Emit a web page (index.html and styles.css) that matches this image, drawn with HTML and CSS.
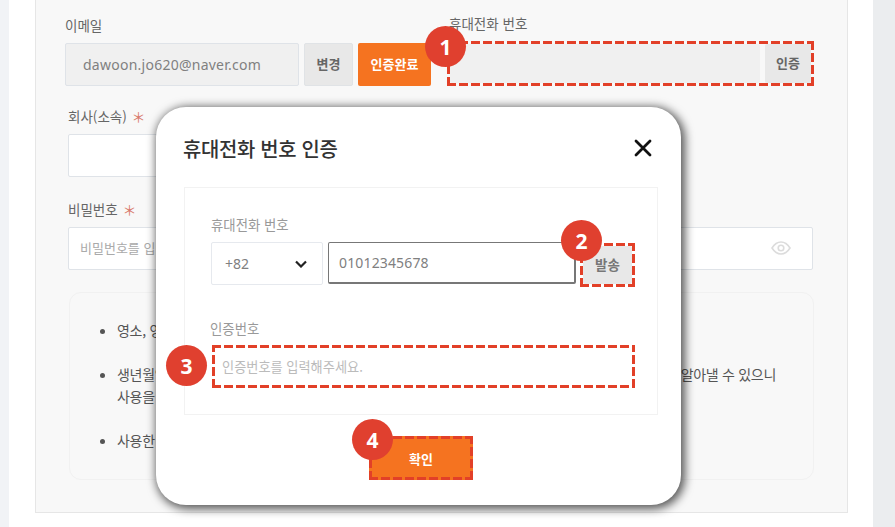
FILE: index.html
```html
<!DOCTYPE html>
<html lang="ko">
<head>
    <meta charset="UTF-8">
    <meta name="viewport" content="width=device-width, initial-scale=1.0">
    <title>휴대전화 번호 인증</title>
    <link rel="stylesheet" href="styles.css">
</head>
<body>
    <div class="sheet">
        <form class="panel">
            <div class="row-top">
                <div class="col-email">
                    <label class="label">이메일</label>
                    <div class="field-row">
                        <input class="input input-email" type="text" value="dawoon.jo620@naver.com" readonly>
                        <button type="button" class="btn btn-gray btn-change">변경</button>
                        <button type="button" class="btn btn-orange btn-done">인증완료</button>
                    </div>
                </div>
                <div class="col-phone">
                    <label class="label">휴대전화 번호</label>
                    <div class="field-row dashed phone-box">
                        <input class="input input-phone" type="text" readonly>
                        <button type="button" class="btn btn-gray btn-auth">인증</button>
                    </div>
                </div>
            </div>

            <div class="group group-company">
                <label class="label">회사(소속) <span class="req">＊</span></label>
                <input class="input input-company" type="text">
            </div>

            <div class="group group-password">
                <label class="label">비밀번호 <span class="req">＊</span></label>
                <div class="password-box">
                    <span class="placeholder">비밀번호를 입력</span>
                    <svg class="eye" width="20" height="14" viewBox="0 0 20 14" fill="none" stroke="#dcdcdc" stroke-width="1.6">
                        <path d="M1 7C3.5 3 6.5 1 10 1s6.500 2 9 6c-2.500 4-5.500 6-9 6S3.500 11 1 7Z"/>
                        <circle cx="10" cy="7" r="2.800"/>
                    </svg>
                </div>
            </div>

            <div class="notice">
                <ul>
                    <li>영소, 영</li>
                    <li>
                        <span class="split-line"><span>생년월일</span><span>알아낼 수 있으니</span></span>
                        사용을
                    </li>
                    <li>사용한</li>
                </ul>
            </div>
        </form>
    </div>

    <div class="modal">
        <div class="modal-head">
            <h2>휴대전화 번호 인증</h2>
            <svg class="close" width="18" height="18" viewBox="0 0 18 18" stroke="#111" stroke-width="2.800" stroke-linecap="round">
                <path d="M2 2l14 14M16 2L2 16"/>
            </svg>
        </div>
        <div class="modal-box">
            <label class="label label-sm">휴대전화 번호</label>
            <div class="send-row">
                <div class="country">
                    <span>+82</span>
                    <svg width="12" height="8" viewBox="0 0 12 8" fill="none" stroke="#222" stroke-width="2.200">
                        <path d="M1 1.500l5 5 5-5"/>
                    </svg>
                </div>
                <input class="input input-mobile" type="text" value="01012345678">
                <div class="dashed send-box">
                    <button type="button" class="btn btn-gray btn-send">발송</button>
                </div>
            </div>
            <label class="label label-sm label-code">인증번호</label>
            <div class="dashed code-box">
                <span class="placeholder">인증번호를 입력해주세요.</span>
            </div>
        </div>
        <button type="button" class="btn btn-orange dashed btn-confirm">확인</button>
    </div>

    <span class="badge badge-1">1</span>
    <span class="badge badge-2">2</span>
    <span class="badge badge-3">3</span>
    <span class="badge badge-4">4</span>
</body>
</html>
```

FILE: styles.css
```css
* {
    box-sizing: border-box;
}
html, body {
    height: 527px;
}
body {
    margin: 0;
    border-left: 9px solid #f1f3f6;
    overflow: hidden;
    background-color: #ebedef;
    font-family: "Noto Sans CJK KR", "Noto Sans", sans-serif;
    color: #555;
}
.sheet {
    width: 864px;
    height: 527px;
    padding-left: 26px;
    background-color: white;
}
.panel {
    width: 813px;
    height: 513px;
    padding-left: 29px;
    background-color: #f8f8f8;
    border: 1px solid #e6e6e6;
    border-top: none;
}
.label {
    display: block;
    height: 18px;
    margin-bottom: 9px;
    font-size: 13.500px;
    line-height: 18px;
    color: #666;
}
.req {
    margin-left: 1px;
    font-size: 14px;
    color: #d9796c;
}
.row-top {
    display: flex;
    align-items: flex-end;
    gap: 16px;
    padding-top: 14px;
}
.field-row {
    display: flex;
    gap: 5px;
}
.input {
    display: block;
    height: 43px;
    border: 1px solid #dfe3e8;
    border-radius: 2px;
    background-color: white;
    font-family: "Noto Sans", sans-serif;
    font-size: 14px;
    color: #808080;
    outline: none;
}
.input-email {
    width: 234px;
    padding-left: 17px;
    background-color: #f0f0f0;
    letter-spacing: 0.250px;
}
.btn {
    height: 43px;
    padding: 0 0 2px;
    border: none;
    border-radius: 2px;
    font-family: "Noto Sans CJK KR", sans-serif;
    font-size: 13px;
    font-weight: 700;
}
.btn-gray {
    background-color: #e8e8e8;
    border: 1px solid #e0e3e6;
    color: #666;
}
.btn-orange {
    background-color: #f57320;
    color: white;
}
.btn-change {
    width: 49px;
}
.btn-done {
    width: 73px;
}
.col-phone .label {
    margin-left: 2px;
}
/* long dashes, a border: dashed comes out too short */
.dashed {
    padding: 3px;
    background-image:
        repeating-linear-gradient(90deg, #e24028 0 9px, transparent 9px 12px),
        repeating-linear-gradient(90deg, #e24028 0 9px, transparent 9px 12px),
        repeating-linear-gradient(0deg, #e24028 0 9px, transparent 9px 12px),
        repeating-linear-gradient(0deg, #e24028 0 9px, transparent 9px 12px);
    background-size: 100% 3px, 100% 3px, 3px 100%, 3px 100%;
    background-position: 0 0, 0 100%, 0 0, 100% 0;
    background-repeat: no-repeat;
}
.phone-box {
    width: 367px;
    height: 45px;
    gap: 5px;
}
.input-phone {
    width: 310px;
    height: 39px;
    border: none;
    background-color: #f0f0f0;
}
.btn-auth {
    width: 46px;
    height: 39px;
    border: none;
}
.group-company {
    margin: 21px 0 0 3px;
}
.input-company {
    width: 300px;
}
.group-password {
    margin: 23px 0 0 3px;
}
.password-box {
    display: flex;
    align-items: center;
    justify-content: space-between;
    width: 745px;
    height: 43px;
    padding: 0 21px 2px 11px;
    border: 1px solid #dfe3e8;
    border-radius: 2px;
    background-color: white;
}
.placeholder {
    font-size: 13px;
    color: #aaa;
}
.notice {
    width: 745px;
    height: 188px;
    margin: 22px 0 0 4px;
    padding-top: 26px;
    border: 1px solid #f1f1f1;
    border-radius: 12px;
}
.notice ul {
    margin: 0;
    padding-left: 47px;
}
.notice li {
    margin-bottom: 22px;
    font-size: 14px;
    line-height: 22px;
    white-space: nowrap;
    letter-spacing: -0.300px;
    color: #555;
}
.split-line {
    display: flex;
    justify-content: space-between;
    width: 659px;
}
.modal {
    position: absolute;
    left: 156px;
    top: 107px;
    width: 525px;
    height: 398px;
    padding-left: 28px;
    background-color: white;
    border-radius: 30px;
    box-shadow: 2px 2px 10px 2px rgba(0, 0, 0, 0.65);
}
.modal-head {
    display: flex;
    align-items: center;
    justify-content: space-between;
    height: 80px;
    padding: 2px 29px 0 0;
}
.modal-head h2 {
    margin: 0 0 0 -1px;
    font-size: 19.900px;
    font-weight: 500;
    color: #333;
    letter-spacing: -0.300px;
}
.modal-box {
    width: 474px;
    height: 228px;
    padding: 27px 0 0 26px;
    border: 1px solid #f2f2f2;
}
.label-sm {
    margin-bottom: 9px;
    font-size: 13.400px;
    color: #999;
}
.send-row {
    display: flex;
    align-items: flex-start;
    height: 45px;
}
.country {
    display: flex;
    align-items: center;
    justify-content: space-between;
    width: 112px;
    height: 43px;
    padding: 0 15px 0 13px;
    border: 1px solid #e6e9ee;
    border-radius: 2px;
    font-family: "Noto Sans", sans-serif;
    font-size: 14px;
    color: #808080;
}
.input-mobile {
    width: 248px;
    height: 42px;
    margin-left: 5px;
    padding-left: 10px;
    border: 1px solid #777;
    border-bottom-width: 2px;
    border-right-width: 2px;
    letter-spacing: 0.150px;
}
.send-box {
    width: 55px;
    height: 44px;
    margin: 1px 0 0 4px;
}
.btn-send {
    display: block;
    width: 100%;
    height: 100%;
    border: none;
    font-size: 13.500px;
    color: #777;
}
.label-code {
    margin: 32px 0 8px -1px;
}
.code-box {
    display: flex;
    align-items: center;
    width: 423px;
    height: 43px;
    margin-left: 1px;
    padding: 0 0 0 10px;
}
.code-box .placeholder {
    font-size: 13.200px;
    color: #bbb;
}
.btn-confirm {
    display: block;
    width: 104px;
    height: 44px;
    margin: 21px 0 0 185px;
    border-radius: 0;
}
.badge {
    position: absolute;
    display: flex;
    align-items: center;
    justify-content: center;
    width: 41px;
    height: 41px;
    border-radius: 50%;
    background-color: #e0402f;
    font-family: "Open Sans", sans-serif;
    font-size: 21px;
    font-weight: 700;
    color: white;
}
.badge-1 {
    left: 425px;
    top: 26px;
}
.badge-2 {
    left: 561px;
    top: 220px;
}
.badge-3 {
    left: 166px;
    top: 345px;
}
.badge-4 {
    left: 352px;
    top: 419px;
}
```
